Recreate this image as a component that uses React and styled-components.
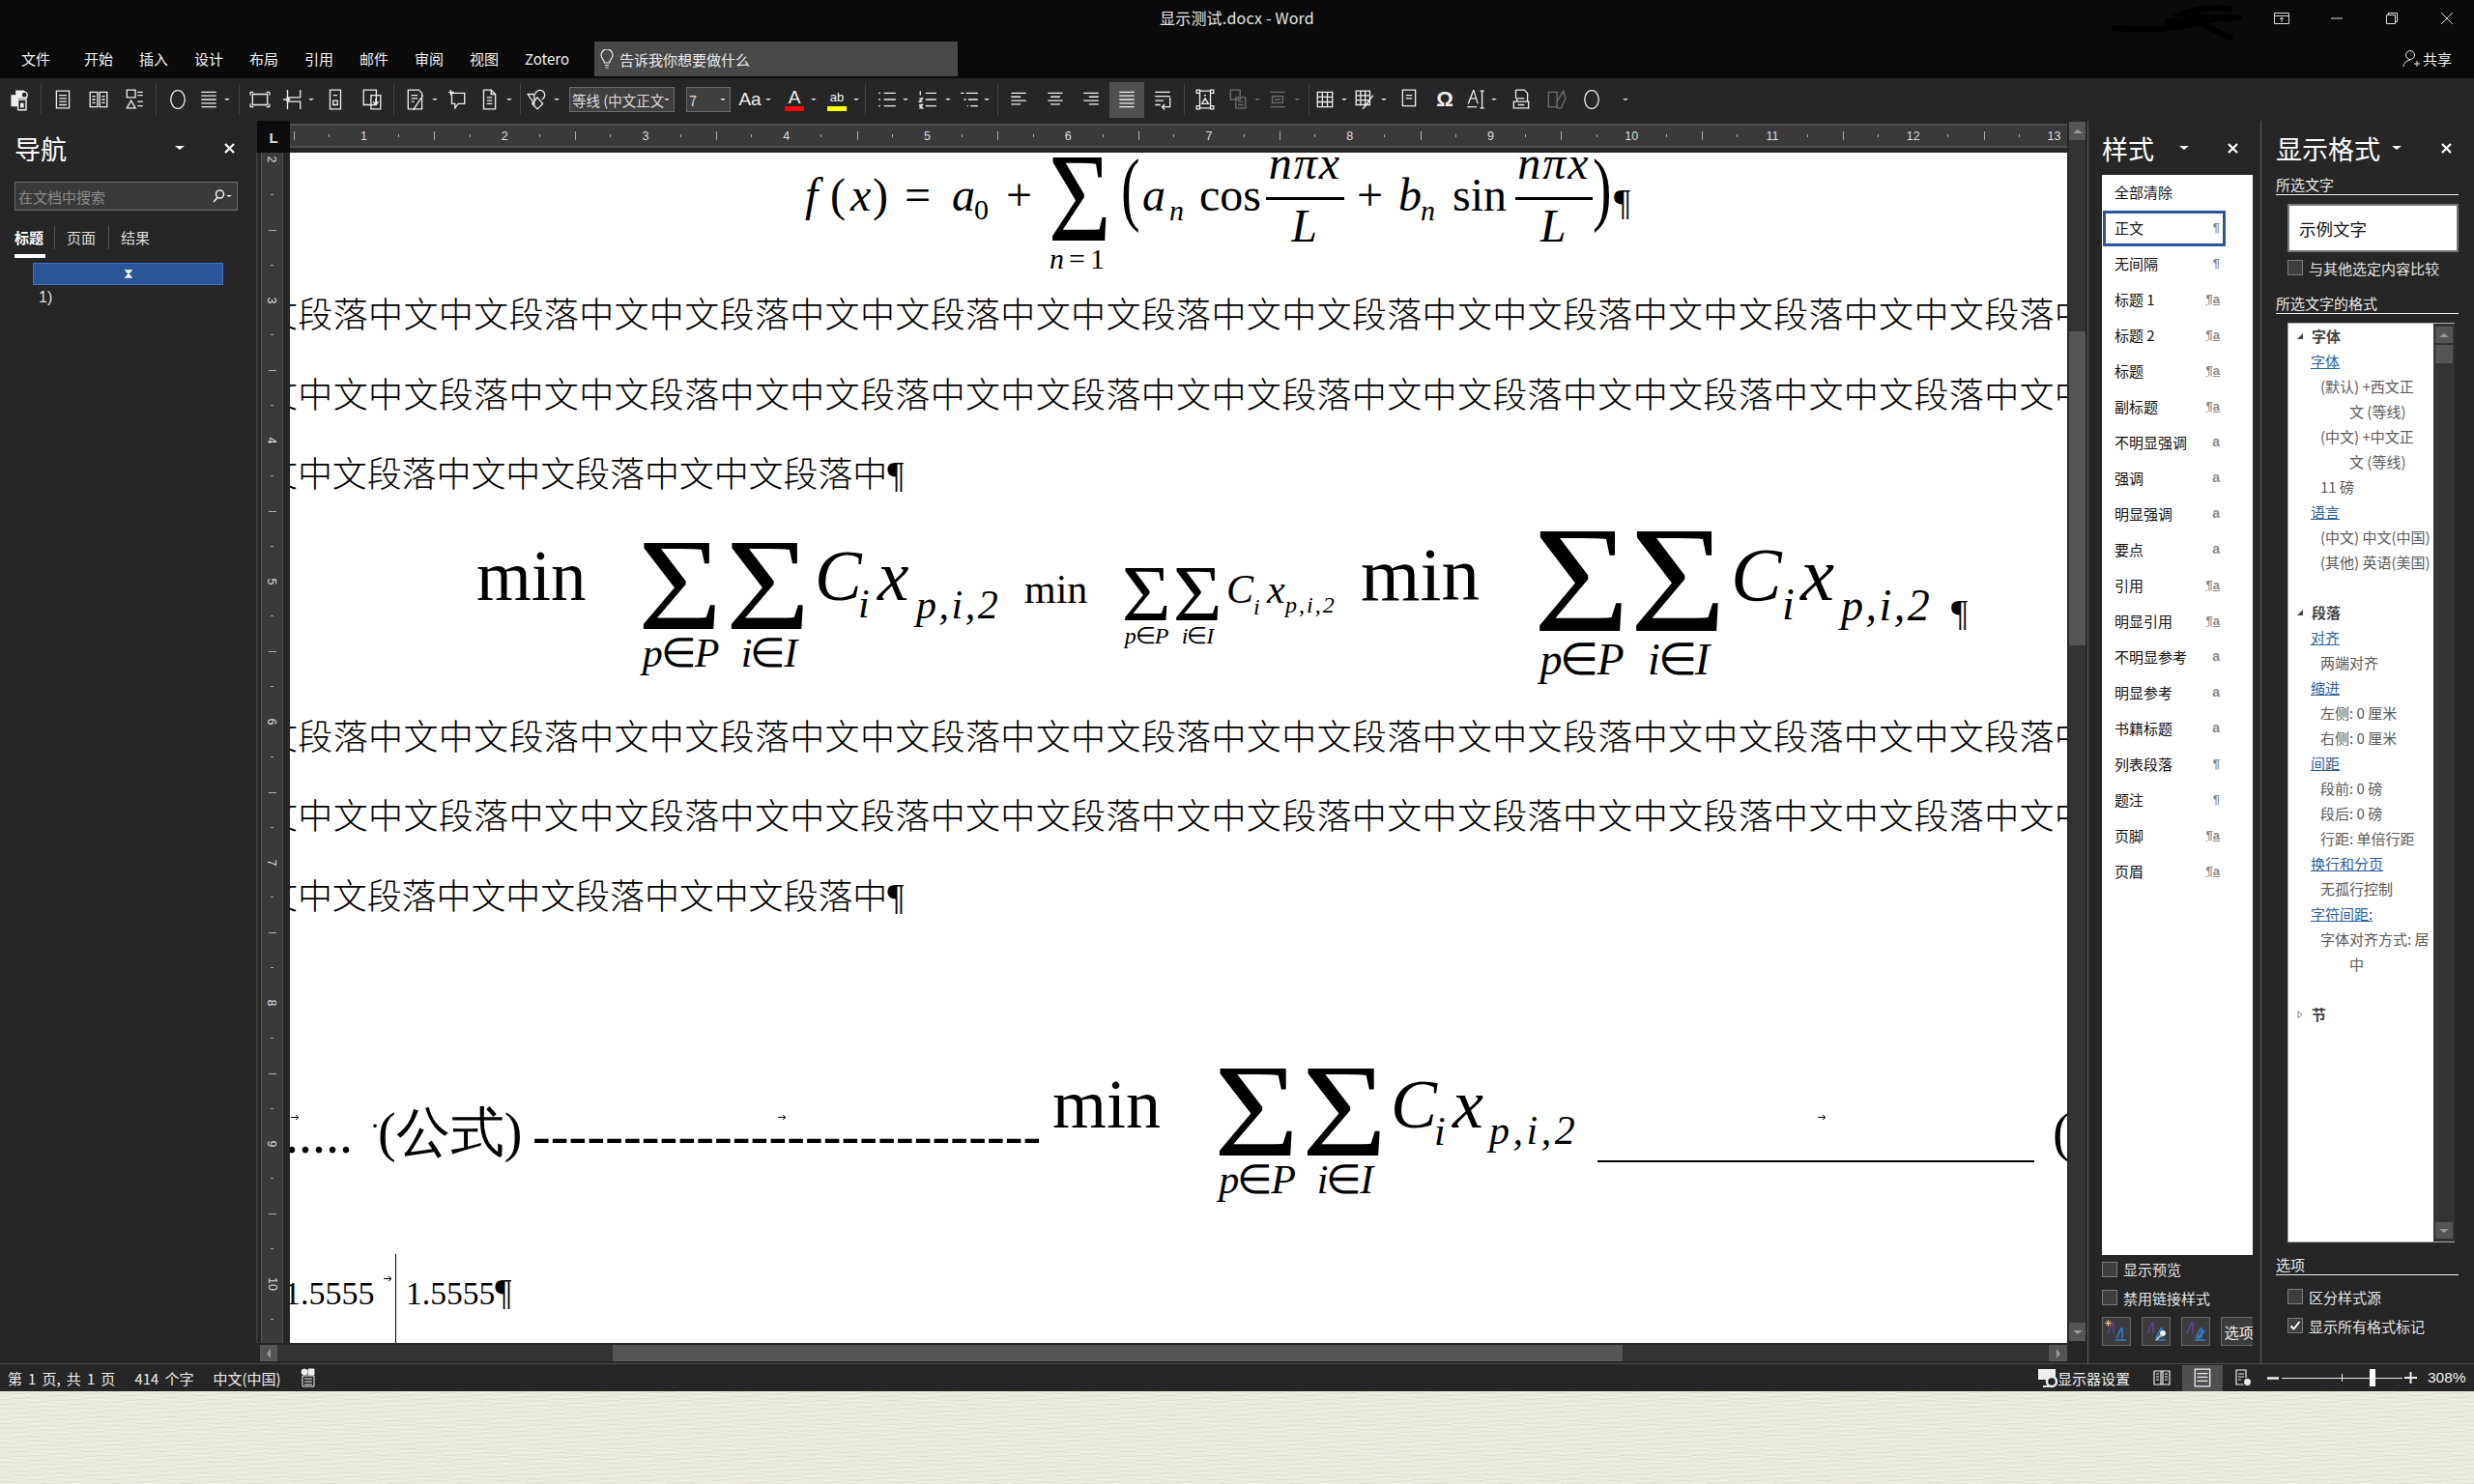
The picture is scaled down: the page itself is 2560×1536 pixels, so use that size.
import styled, { createGlobalStyle } from "styled-components";

const GlobalStyle = createGlobalStyle`
  html, body { margin: 0; padding: 0; background: #e9eadd; }
  body { font-family: "Noto Sans CJK SC", "Liberation Sans", sans-serif; font-size: 15px; color: #eee; }
  #root { width: 2560px; height: 1536px; overflow: hidden; }
  * { box-sizing: border-box; }
`;

const Shell = styled.div`
  display: flex;
  flex-direction: column;
  width: 2560px;
  height: 1536px;
`;

/* title bar + menu */
const TitleBar = styled.header`
  height: 81px;
  flex: none;
  background: #0a0a0a;
  display: flex;
  flex-direction: column;
`;

const TitleRow = styled.div`
  height: 43px;
  display: grid;
  grid-template-columns: 1fr auto 1fr;
`;

const DocTitle = styled.div`
  font-size: 16px;
  letter-spacing: 0.2px;
  line-height: 37px;
  color: #e6e6e6;
`;

const WindowButtons = styled.div`
  display: flex;
  justify-content: flex-end;
  align-items: flex-start;
`;

const WindowButton = styled.div`
  width: 57px;
  height: 38px;
  display: flex;
  align-items: center;
  justify-content: center;
`;

const Scribble = styled.svg`
  width: 150px;
  height: 44px;
  margin-right: 2px;
`;

const MenuRow = styled.nav`
  height: 38px;
  display: flex;
  align-items: flex-start;
  padding-left: 22px;
`;

const MenuItem = styled.span`
  width: ${(p) => p.$w || 30}px;
  margin-right: ${(p) => p.$gap ?? 27}px;
  font-size: 15px;
  line-height: 35px;
  white-space: nowrap;
  color: #f2f2f2;
`;

const TellMe = styled.div`
  width: 376px;
  height: 36px;
  background: #484848;
  display: flex;
  align-items: center;
  padding-left: 6px;
  gap: 6px;
  font-size: 15px;
  color: #e8e8e8;
`;

const Share = styled.div`
  margin-left: auto;
  margin-right: 23px;
  display: flex;
  align-items: center;
  gap: 3px;
  font-size: 15px;
  line-height: 35px;
  height: 35px;
  color: #f0f0f0;
`;

/* ribbon toolbar */
const Toolbar = styled.div`
  height: 44px;
  flex: none;
  background: #262626;
  display: flex;
  align-items: center;
`;

const Slot = styled.div`
  flex: none;
  width: ${(p) => p.$w}px;
  margin-left: ${(p) => p.$ml}px;
  height: ${(p) => (p.$active ? 37 : 30)}px;
  background: ${(p) => (p.$active ? "#505050" : "transparent")};
  opacity: ${(p) => (p.$dim ? 0.35 : 1)};
  display: flex;
  align-items: center;
  justify-content: center;
  color: #eee;
`;

const ToolSep = styled.div`
  flex: none;
  width: 1px;
  height: 32px;
  margin-left: ${(p) => p.$ml}px;
  background: #444;
`;

const Caret = styled.i`
  display: block;
  width: 0;
  height: 0;
  border-left: ${(p) => p.$size || 3.5}px solid transparent;
  border-right: ${(p) => p.$size || 3.5}px solid transparent;
  border-top: ${(p) => (p.$size || 3.5) * 0.85}px solid ${(p) => p.$color || "#e8e8e8"};
  transform: rotate(${(p) => p.$turn || 0}deg);
`;

const ComboBox = styled.div`
  flex: none;
  width: ${(p) => p.$w}px;
  margin-left: ${(p) => p.$ml}px;
  height: 26px;
  background: #3f3f3f;
  border: 1px solid #6b6b6b;
  display: flex;
  align-items: center;
  padding: 0 4px 0 2px;
  font-size: 14.5px;
  color: #ddd;
  overflow: hidden;
  white-space: nowrap;
`;

const ComboText = styled.span`
  flex: 1;
  overflow: hidden;
  min-width: 0;
`;

const ColorGlyph = styled.div`
  display: flex;
  flex-direction: column;
  align-items: center;
  width: 20px;
  font: ${(p) => p.$font};
  line-height: 19px;
  color: #f0f0f0;
  &::after {
    content: "";
    display: block;
    width: 100%;
    height: 5px;
    background: ${(p) => p.$bar};
  }
`;

const TextGlyph = styled.span`
  font-family: "Liberation Sans", sans-serif;
  font-size: ${(p) => p.$size}px;
  font-weight: ${(p) => p.$weight || 400};
  color: #eee;
`;

/* workspace */
const Workspace = styled.main`
  height: 1286px;
  flex: none;
  display: flex;
  background: #262626;
`;

const SidePanel = styled.aside`
  flex: none;
  width: ${(p) => p.$w}px;
  border-left: ${(p) => (p.$divider ? "1px solid #5c5c5c" : "none")};
  padding-left: ${(p) => p.$pad}px;
  display: flex;
  flex-direction: column;
`;

const PanelHead = styled.div`
  height: 56px;
  flex: none;
  display: flex;
  align-items: center;
`;

const PanelTitle = styled.h2`
  margin: 0;
  font-size: 27px;
  font-weight: 400;
  line-height: 1;
  color: #fff;
`;

const HeadCaret = styled.span`
  margin-left: ${(p) => p.$ml}px;
  display: flex;
`;

const CloseBox = styled.svg`
  width: 11px;
  height: 11px;
  margin-left: ${(p) => p.$ml}px;
`;

/* navigation pane */
const NavSearch = styled.div`
  width: 231px;
  height: 30px;
  margin-top: 7px;
  background: #3a3a3a;
  border: 1px solid #6e6e6e;
  display: flex;
  align-items: center;
  padding: 0 5px 0 3px;
  font-size: 15px;
  color: #8a8a8a;
`;

const NavSearchText = styled.span`
  flex: 1;
`;

const NavTabs = styled.div`
  display: flex;
  margin-top: 16px;
  height: 24px;
  align-items: center;
`;

const NavTab = styled.span`
  width: ${(p) => p.$w}px;
  font-size: 15px;
  font-weight: ${(p) => (p.$on ? 700 : 400)};
  color: ${(p) => (p.$on ? "#fff" : "#ddd")};
  border-right: ${(p) => (p.$line ? "1px solid #555" : "none")};
  margin-right: 12px;
  line-height: 24px;
`;

const NavUnderline = styled.div`
  width: 32px;
  height: 4px;
  margin-top: 5px;
  background: #fff;
`;

const NavHeading = styled.div`
  width: 197px;
  height: 23px;
  margin: 5px 0 0 19px;
  background: #2b579a;
  border: 1px solid #4472c4;
  display: flex;
  align-items: center;
  justify-content: center;
`;

const NavLeaf = styled.div`
  margin: 1px 0 0 25px;
  font-family: "Liberation Sans", sans-serif;
  font-size: 16px;
  line-height: 24px;
  color: #ddd;
`;

/* document frame */
const DocFrame = styled.section`
  flex: none;
  width: 1895px;
  display: grid;
  grid-template-columns: 35px 1839px 21px;
  grid-template-rows: 33px 1232px 21px;
`;

const RulerCorner = styled.div`
  background: #0c0c0c;
  display: flex;
  align-items: center;
  justify-content: center;
  margin-left: 1px;
  font-family: "Liberation Sans", sans-serif;
  font-size: 15px;
  font-weight: 700;
  color: #ddd;
  padding-top: 2px;
`;

const HRuler = styled.div`
  height: 25px;
  margin-top: 3px;
  background: #3a3a3a;
  border-top: 2px solid #4e4e4e;
  border-bottom: 2px solid #4e4e4e;
  padding-left: 3.6px;
  display: flex;
  overflow: hidden;
`;

const tickFill = "linear-gradient(#a8a8a8, #a8a8a8)";

const HRulerCell = styled.div`
  flex: none;
  width: 145.75px;
  display: flex;
  align-items: center;
  justify-content: center;
  font-family: "Liberation Sans", sans-serif;
  font-size: 12.5px;
  color: #ddd;
  background-image: ${tickFill}, ${tickFill}, ${tickFill};
  background-repeat: no-repeat;
  background-size: 1px 9px, 1px 3px, 1px 3px;
  background-position: 0 center, 25% center, 75% center;
`;

const VRulerCol = styled.div`
  padding: 0 7px 0 3px;
  overflow: hidden;
  background: #262626;
  border-left: 2px solid #3a3a3a;
`;

const VRuler = styled.div`
  background: #3a3a3a;
  height: 1232px;
  overflow: hidden;
  border-left: 1px solid #555;
  border-right: 1px solid #4e4e4e;
`;

const VRulerCell = styled.div`
  height: 145.5px;
  display: flex;
  align-items: center;
  justify-content: center;
  font-family: "Liberation Sans", sans-serif;
  font-size: 12.5px;
  color: #ddd;
  background-image: ${tickFill}, ${tickFill}, ${tickFill};
  background-repeat: no-repeat;
  background-size: 8px 1px, 3px 1px, 3px 1px;
  background-position: center 0, center 25%, center 75%;
  &:first-child {
    margin-top: -65.7px;
  }
`;

const VRulerNum = styled.span`
  transform: rotate(90deg);
`;

const VScroll = styled.div`
  grid-row: 1 / span 2;
  grid-column: 3;
  padding: 1px 2px 2px 2px;
  display: flex;
  flex-direction: column;
  background: #262626;
`;

const ScrollButton = styled.div`
  flex: none;
  width: ${(p) => p.$w}px;
  height: ${(p) => p.$h}px;
  background: #555;
  display: flex;
  align-items: center;
  justify-content: center;
  color: #999;
`;

const VTrack = styled.div`
  flex: 1;
  background: #333;
  padding-top: 198px;
`;

const VThumb = styled.div`
  height: 325px;
  background: #555;
`;

const HScroll = styled.div`
  grid-row: 3;
  grid-column: 1 / span 2;
  margin: 2px 0 2px 4px;
  display: flex;
  background: #262626;
`;

const HTrack = styled.div`
  flex: 1;
  background: #333;
  padding-left: 347px;
`;

const HThumb = styled.div`
  width: 1045px;
  height: 100%;
  background: #555;
`;

/* page */
const Page = styled.article`
  background: #fff;
  color: #000;
  overflow: hidden;
  display: flex;
  flex-direction: column;
  position: relative;
`;

const MathRow = styled.div`
  flex: none;
  width: ${(p) => (p.$width ? `${p.$width}px` : "auto")};
  height: ${(p) => p.$h}px;
  margin-left: ${(p) => p.$left || 0}px;
  padding-left: ${(p) => p.$pad || 0}px;
  display: flex;
  align-items: baseline;
  font-family: "Liberation Serif", serif;
  color: #000;
  border-left: ${(p) => (p.$rule ? "1px solid #000" : "none")};
  position: relative;
  &::before {
    content: "";
    flex: none;
    width: 0;
    height: ${(p) => p.$base}px;
  }
`;

const Atom = styled.span`
  flex: none;
  display: block;
  width: ${(p) => (p.$w ? `${p.$w}px` : "auto")};
  font-size: ${(p) => p.$size}px;
  font-style: ${(p) => (p.$i ? "italic" : "normal")};
  letter-spacing: ${(p) => p.$ls || 0}px;
  line-height: 0;
  white-space: pre;
  transform-origin: 0 0;
  transform: translateY(${(p) => p.$drop || 0}px) scaleX(${(p) => p.$sx || 1});
`;

const SumBox = styled.span`
  flex: none;
  width: ${(p) => p.$w}px;
  margin-right: ${(p) => p.$after}px;
  display: flex;
  flex-direction: column;
  align-items: center;
  transform: translateY(${(p) => p.$drop}px);
  line-height: 0;
`;

const SumGlyph = styled.span`
  font-size: ${(p) => p.$size}px;
  line-height: 0;
  transform: scaleX(${(p) => p.$sx});
`;

const SumLimit = styled.span`
  font-size: ${(p) => p.$size}px;
  font-style: italic;
  letter-spacing: ${(p) => p.$ls || 0}px;
  line-height: 0;
  white-space: pre;
  margin-top: ${(p) => p.$gap}px;
`;

const Upright = styled.span`
  font-style: normal;
`;

const Frac = styled.span`
  flex: none;
  width: ${(p) => p.$w}px;
  margin-right: ${(p) => p.$after}px;
  display: flex;
  flex-direction: column;
  align-items: center;
  font-size: 48px;
  font-style: italic;
  line-height: 1;
  letter-spacing: 2px;
  transform: translateY(-33px);
`;

const FracBar = styled.span`
  align-self: stretch;
  height: 3px;
  margin: 11px 0 3px;
  background: #000;
`;

const RuleAtom = styled.span`
  flex: none;
  align-self: flex-start;
  width: ${(p) => p.$w}px;
  height: 2px;
  background: #000;
  transform: translateY(${(p) => p.$top}px);
`;

const TabMark = styled.svg`
  position: absolute;
  left: ${(p) => p.$x}px;
  top: ${(p) => p.$y}px;
  width: 9px;
  height: 7px;
`;

const Para = styled.p`
  margin: 0;
  flex: none;
  font-family: "Noto Sans CJK SC", sans-serif;
  font-size: 36px;
  font-weight: 300;
  letter-spacing: 0.35px;
  line-height: 82.5px;
  white-space: nowrap;
  margin-left: -28px;
`;

const LastLine = styled.span`
  letter-spacing: -0.1px;
`;

const Pilcrow = styled.span`
  font-family: "Liberation Serif", serif;
  font-size: 38px;
`;

const TableRow = styled.div`
  flex: none;
  display: flex;
  height: 98px;
`;

/* styles pane */
const StyleList = styled.div`
  width: 156px;
  height: 1118px;
  flex: none;
  background: #fff;
`;

const StyleRow = styled.div`
  width: 127px;
  height: 37px;
  margin-left: 1px;
  display: flex;
  align-items: center;
  justify-content: space-between;
  padding: 0 ${(p) => (p.$on ? 3 : 6)}px 2px ${(p) => (p.$on ? 9 : 12)}px;
  border: ${(p) => (p.$on ? "3px solid #2b579a" : "none")};
  font-size: 15px;
  color: #111;
`;

const StyleMark = styled.span`
  font-family: "Liberation Sans", sans-serif;
  font-size: ${(p) => (p.$kind === "a" ? 14 : 13)}px;
  font-weight: 700;
  line-height: 13px;
  color: #8a8a8a;
  text-decoration: ${(p) => (p.$kind === "¶a" ? "underline" : "none")};
`;

const CheckRow = styled.label`
  height: ${(p) => p.$h || 30}px;
  margin-left: ${(p) => p.$ml || 0}px;
  margin-top: ${(p) => p.$mt || 0}px;
  display: flex;
  align-items: center;
  gap: 6px;
  font-size: 15px;
  color: #e4e4e4;
  flex: none;
`;

const CheckBox = styled.span`
  width: 16px;
  height: 16px;
  flex: none;
  background: #3e3e3e;
  border: 1px solid #7a7a7a;
  display: flex;
  align-items: center;
  justify-content: center;
`;

const StyleButtons = styled.div`
  display: flex;
  gap: 11px;
  width: 156px;
  overflow: hidden;
  margin-top: 5px;
  flex: none;
`;

const StyleButton = styled.div`
  flex: none;
  width: ${(p) => p.$w || 30}px;
  height: 30px;
  background: #3c3c3c;
  border: 1px solid #666;
  display: flex;
  align-items: center;
  justify-content: center;
  font-size: 15px;
  color: #eee;
  white-space: nowrap;
  overflow: hidden;
`;

/* reveal formatting pane */
const SectionLabel = styled.div`
  width: 189px;
  height: ${(p) => p.$h}px;
  margin-top: ${(p) => p.$mt || 0}px;
  flex: none;
  display: flex;
  align-items: flex-end;
  border-bottom: 1px solid #eee;
  font-size: 15px;
  line-height: 20px;
  color: #eaeaea;
`;

const SampleBox = styled.div`
  width: 177px;
  height: 50px;
  margin: 9px 0 0 12px;
  flex: none;
  background: #fff;
  border: 2px solid #777;
  display: flex;
  align-items: center;
  padding-left: 10px;
  font-size: 17.5px;
  color: #111;
`;

const RevealBox = styled.div`
  width: 173px;
  height: 952px;
  margin: 9px 0 0 12px;
  flex: none;
  background: #fff;
  border: 1px solid #aaa;
  display: flex;
`;

const RevealBody = styled.div`
  width: 150px;
  flex: none;
  overflow: hidden;
`;

const RevealRow = styled.div`
  height: 26px;
  padding-left: ${(p) => p.$indent}px;
  font-size: 15px;
  line-height: 26px;
  white-space: nowrap;
  display: flex;
  align-items: center;
  font-weight: ${(p) => (p.$kind === "head" ? 700 : 400)};
  color: ${(p) => (p.$kind === "link" ? "#2b5f9e" : p.$kind === "head" ? "#444" : "#5a5a5a")};
  text-decoration: ${(p) => (p.$kind === "link" ? "underline" : "none")};
`;

const Twisty = styled.svg`
  width: 8px;
  height: 8px;
  margin-right: 8px;
  margin-left: -16px;
  flex: none;
`;

const RevealScroll = styled.div`
  flex: 1;
  background: #333;
  padding: 3px 2px;
  display: flex;
  flex-direction: column;
`;

const RevealThumb = styled.div`
  height: 19px;
  margin-top: 2px;
  background: #555;
`;

const RevealSpace = styled.div`
  flex: 1;
`;

/* status bar */
const StatusBar = styled.footer`
  height: 29px;
  flex: none;
  background: #262626;
  border-top: 1px solid #4a4a4a;
  display: flex;
  align-items: center;
  padding-left: 8px;
  font-size: 15px;
  word-spacing: 2.75px;
  color: #eee;
  white-space: nowrap;
`;

const StatusText = styled.span`
  margin-right: ${(p) => p.$gap || 0}px;
`;

const StatusRight = styled.div`
  margin-left: auto;
  display: flex;
  align-items: center;
  height: 100%;
`;

const ViewButton = styled.div`
  width: 42px;
  height: 27px;
  background: ${(p) => (p.$on ? "#505050" : "transparent")};
  display: flex;
  align-items: center;
  justify-content: center;
`;

const ZoomMinus = styled.svg`
  width: 14px;
  height: 3px;
  margin-left: 4px;
`;

const ZoomTrack = styled.div`
  width: 125px;
  height: 1px;
  background: #eee;
  margin: 0 2px 0 1px;
  display: flex;
  align-items: center;
  padding-left: 62px;
`;

const ZoomMark = styled.i`
  display: block;
  width: 1px;
  height: 8px;
  background: #eee;
`;

const ZoomThumb = styled.i`
  display: block;
  width: 6px;
  height: 18px;
  margin-left: 28px;
  background: #fff;
`;

const ZoomValue = styled.span`
  width: 40px;
  margin: 0 8px 0 10px;
  font-family: "Liberation Sans", sans-serif;
  font-size: 15.5px;
`;

const Wallpaper = styled.div`
  flex: 1;
  background-color: #e9eadd;
  background-image:
    repeating-linear-gradient(3deg, rgba(255, 255, 255, 0.3) 0 1px, transparent 1px 4px),
    repeating-linear-gradient(-4deg, rgba(170, 175, 140, 0.16) 0 1px, transparent 1px 5px);
`;

/* toolbar icons */
const strokeIcons = {
  doc: "M4 2h12v16H4zM6.5 6h7M6.5 9h7M6.5 12h7M6.5 15h7",
  twocol: "M2 3h7v14H2zM11 3h7v14h-7zM4 7h3M4 10h3M4 13h3M13 7h3M13 10h3M13 13h3",
  shapes: "M3 1h8v7H3zM13 3h5M13 6h5M7 11l-4 7h8zM13 12h5M13 16h5",
  circle: "M10 1.5a6.5 8.5 0 1 0 .01 0z",
  lines: "M3 3h14M3 6.5h14M3 10h14M3 13.5h14M3 17h14",
  frame: "M3 5h14v10H3zM1 3h3M1 3v3M16 3h3M19 3v3M1 17h3M1 17v-3M16 17h3M19 17v-3",
  split: "M5 1v7h12V1M5 19v-7h12v7M1 10h6M4 8l3 2-3 2",
  phone: "M5 1h10v18H5zM8 11h4v4H8zM8 6h4",
  twopage: "M2 1h12v14H2zM9 6h9v13H9zM11 12l2.5 3 2.5-3M13.5 9v6",
  edit: "M3 1h10l3 3v15H3zM6 6h6M6 9h6M6 12h3M17 6l-8 12-1 2",
  comment: "M5 4h12v10h-6l-3 4v-4H5zM4 1v5M2 3h5",
  page: "M5 1h7l4 4v14H5zM12 1v4h4M8 8h5M8 11h5M8 14h5",
  diamond: "M2 5h6v9zM11 8l5 6-5 5-5-5zM9 5a4.5 4.5 0 1 1 6 5",
  bullets: "M7 4h11M7 10h11M7 16h11M2 4h1.5M2 10h1.5M2 16h1.5",
  numbers: "M8 4h10M8 10h10M8 16h10M3 2v4M2 9h3l-3 3h3M2 15h3l-1 1.5h-1l2 1.5h-3",
  multi: "M2 4h3M7 4h11M5 10h2M9 10h9M8 16h1M11 16h7",
  left: "M3 4h14M3 7.5h9M3 11h14M3 14.5h9",
  center: "M3 4h14M5.5 7.5h9M3 11h14M5.5 14.5h9",
  right: "M3 4h14M8 7.5h9M3 11h14M8 14.5h9",
  justify: "M3 3h14M3 6.5h14M3 10h14M3 13.5h14M3 17h14",
  spacing: "M3 3h14M3 7h14M3 11h8M3 15h5M17 8v9h-7M12 14.5l-2.5 2.5 2.5 2.5",
  picture: "M5 2h10v16H5zM2 1h3v3H2zM15 1h3v3h-3zM2 16h3v3H2zM15 16h3v3h-3zM7 14l3-5 3 5zM9 6h2",
  wrap: "M3 1h9v9H3zM8 8h9v10H8zM10 12h5M10 15h5",
  group: "M3 3h14M3 17h14M5 7h10v6H5zM7 10h6",
  table: "M3 3h14v14H3zM3 7.6h14M3 12.3h14M7.6 3v14M12.3 3v14",
  pentable: "M2 2h13v13H2zM2 6.3h13M2 10.6h13M6.3 2v13M10.6 2v13M18 6l-8 11-2 2",
  form: "M4 1h12v15H4zM7 6h6M7 9h6",
  textfx: "M8 1L3 14M8 1l4 13M5 9h6M16 2v16M14 2h4M14 18h4M2 17h9",
  printer: "M5 1h8l3 3v8M5 1v8M3 12h14v6H3zM6 9h7M7 15h6M6 12V9",
  pen: "M3 3h8v14H3zM17 2l-6 10v6h4l4-9z",
  read: "M2 3h7v14H2zM11 3h7v14h-7zM4 6h3M4 9h3M4 12h3M13 6h3M13 9h3M13 12h3M9 3h2M9 17h2",
  print: "M3 2h14v16H3zM5 6h10M5 9.5h10M5 13h10",
  web: "M3 2h10v15H3zM5 6h6M5 9h6M5 12h3",
};

const ToolIcon = ({ name, size = 22 }) => (
  <svg width={size} height={size} viewBox="0 0 20 20" fill="none" stroke="currentColor" strokeWidth="1.2">
    <path d={strokeIcons[name]} />
    {name === "web" && <circle cx="14.5" cy="14.5" r="4" fill="#eee" stroke="#262626" />}
  </svg>
);

const toolItems = [
  { el: "save", x: 21 }, { sep: 42 },
  { icon: "doc", x: 65 }, { icon: "twocol", x: 102 }, { icon: "shapes", x: 139 }, { sep: 161 },
  { icon: "circle", x: 184 }, { icon: "lines", x: 216 }, { caret: 235 }, { sep: 247 },
  { icon: "frame", x: 269 }, { icon: "split", x: 303 }, { caret: 322 }, { icon: "phone", x: 347 }, { icon: "twopage", x: 385 }, { sep: 407 },
  { icon: "edit", x: 430 }, { caret: 450 }, { icon: "comment", x: 473 }, { icon: "page", x: 506 }, { caret: 527 }, { sep: 538 },
  { icon: "diamond", x: 555 }, { caret: 576 },
  { combo: "等线 (中文正文)", x: 643.5, w: 109 }, { combo: "7", x: 733, w: 46 },
  { el: "aa", x: 776 }, { caret: 795 }, { el: "fontColor", x: 822 }, { caret: 842 }, { el: "highlight", x: 866 }, { caret: 886 }, { sep: 895 },
  { icon: "bullets", x: 918 }, { caret: 937 }, { icon: "numbers", x: 960 }, { caret: 981 }, { icon: "multi", x: 1003 }, { caret: 1021 }, { sep: 1032 },
  { icon: "left", x: 1054 }, { icon: "center", x: 1092 }, { icon: "right", x: 1129 }, { icon: "justify", x: 1166, active: true, w: 36 }, { icon: "spacing", x: 1203 }, { sep: 1225 },
  { icon: "picture", x: 1247 }, { icon: "wrap", x: 1281, dim: true }, { caret: 1301, dim: true }, { icon: "group", x: 1322, dim: true }, { caret: 1342, dim: true }, { sep: 1354 },
  { icon: "table", x: 1371 }, { caret: 1391 }, { icon: "pentable", x: 1412 }, { caret: 1432 }, { icon: "form", x: 1458 }, { el: "omega", x: 1495 }, { icon: "textfx", x: 1527 }, { caret: 1546 }, { icon: "printer", x: 1574 }, { icon: "pen", x: 1610, dim: true }, { icon: "circle", x: 1647 }, { caret: 1682 },
];

const toolWidth = (t) => t.w || (t.sep !== undefined ? 1 : t.caret !== undefined ? 8 : 24);
const toolCenter = (t) => (t.sep !== undefined ? t.sep : t.caret !== undefined ? t.caret : t.x);

const ToolGlyph = ({ el }) => {
  if (el === "aa") return <TextGlyph $size={19}>Aa</TextGlyph>;
  if (el === "omega") return <TextGlyph $size={22} $weight={700}>Ω</TextGlyph>;
  if (el === "fontColor") return <ColorGlyph $font='400 19px "Liberation Sans", sans-serif' $bar="#f00">A</ColorGlyph>;
  if (el === "highlight") return <ColorGlyph $font='400 13px "Liberation Sans", sans-serif' $bar="#ff0">ab</ColorGlyph>;
  return (
    <svg width="24" height="24" viewBox="0 0 20 20">
      <path d="M6 2h7l3 3v4H6z" fill="#eee" />
      <path d="M2 6h6v10H2z" fill="#eee" />
      <path d="M8 10h7v9H8z" fill="#262626" stroke="#eee" strokeWidth="1.2" />
      <circle cx="13.5" cy="6" r="2.5" fill="#262626" stroke="#eee" />
      <path d="M10 13h3v4h-3z" fill="#eee" />
    </svg>
  );
};

const RibbonTools = () => {
  let end = 0;
  return (
    <Toolbar>
      {toolItems.map((t, idx) => {
        const w = toolWidth(t);
        const ml = toolCenter(t) - w / 2 - end;
        end = toolCenter(t) + w / 2;
        if (t.sep !== undefined) return <ToolSep key={idx} $ml={ml} />;
        if (t.combo)
          return (
            <ComboBox key={idx} $w={w} $ml={ml}>
              <ComboText>{t.combo}</ComboText>
              <Caret />
            </ComboBox>
          );
        return (
          <Slot key={idx} $w={w} $ml={ml} $active={t.active} $dim={t.dim}>
            {t.caret !== undefined ? <Caret /> : t.icon ? <ToolIcon name={t.icon} /> : <ToolGlyph el={t.el} />}
          </Slot>
        );
      })}
    </Toolbar>
  );
};

/* equations: each item has the x it starts at, its width runs to the next item */
const MID_RATIO = 0.3375; // (ascent - descent) / 2 of Liberation Serif
const CAP_RATIO = 0.66;

const Sum = ({ w, after, h, bottom, limitY, limit, limitSize, ls, sx = 1 }) => {
  const size = h / CAP_RATIO;
  const gap = limitY - bottom + MID_RATIO * size - MID_RATIO * limitSize;
  return (
    <SumBox $w={w} $after={after} $drop={bottom}>
      <SumGlyph $size={size} $sx={sx}>Σ</SumGlyph>
      <SumLimit $size={limitSize} $gap={gap} $ls={ls}>{limit}</SumLimit>
    </SumBox>
  );
};

const PIn = () => (<>p<Upright>∈</Upright>P</>);
const IIn = () => (<>i<Upright>∈</Upright>I</>);
const N1 = () => (<>n<Upright>=1</Upright></>);

const EquationRow = ({ items, size, base, h, children }) => (
  <MathRow $base={base} $h={h} $left={items[0].x - 300}>
    {items.map((it, idx) => {
      const next = items[idx + 1];
      const span = next ? next.x - it.x : it.w;
      if (it.sum) return <Sum key={idx} w={it.w} after={span - it.w} {...it.sum} />;
      if (it.frac)
        return (
          <Frac key={idx} $w={it.w} $after={span - it.w}>
            nπx<FracBar />L
          </Frac>
        );
      if (it.rule) return <RuleAtom key={idx} $w={span} $top={it.top} />;
      return (
        <Atom key={idx} $w={span} $size={it.size || size} $i={it.i} $drop={it.drop} $ls={it.ls} $sx={it.sx}>
          {it.t}
        </Atom>
      );
    })}
    {children}
  </MathRow>
);

const eq1 = [
  { x: 833, t: "f", i: 1 }, { x: 859, t: "(" }, { x: 880, t: "x", i: 1 }, { x: 903, t: ")" }, { x: 936, t: "=" },
  { x: 985, t: "a", i: 1 }, { x: 1008, t: "0", size: 30, drop: 9 }, { x: 1041, t: "+" },
  { x: 1086, w: 62, sum: { h: 87, sx: 0.85, bottom: 31, limitY: 60, limit: <N1 />, limitSize: 30, ls: 5 } },
  { x: 1160, t: "(", size: 84, sx: 0.7, drop: 5 }, { x: 1182, t: "a", i: 1 }, { x: 1210, t: "n", i: 1, size: 30, drop: 10 },
  { x: 1241, t: "cos" }, { x: 1310, w: 81, frac: 1 }, { x: 1404, t: "+" }, { x: 1447, t: "b", i: 1 }, { x: 1470, t: "n", i: 1, size: 30, drop: 10 },
  { x: 1503, t: "sin" }, { x: 1568, w: 80, frac: 1 }, { x: 1648, t: ")", size: 84, sx: 0.7, drop: 5 }, { x: 1670, t: "¶", size: 38, drop: 4, w: 20 },
];

const eq2 = [
  { x: 493, t: "min" },
  { x: 667, w: 73, sum: { h: 90, sx: 1.1, bottom: 30, limitY: 70, limit: <PIn />, limitSize: 42, ls: -2 } },
  { x: 758, w: 74, sum: { h: 90, sx: 1.1, bottom: 30, limitY: 70, limit: <IIn />, limitSize: 42, ls: -2 } },
  { x: 843, t: "C", i: 1 }, { x: 888, t: "i", i: 1, size: 42, drop: 18 }, { x: 908, t: "x", i: 1 },
  { x: 948, t: "p,i,2", i: 1, size: 42, drop: 19, ls: 2.5 },
  { x: 1060, t: "min", size: 42, drop: 3 },
  { x: 1164, w: 44, sum: { h: 55, sx: 1.05, bottom: 21, limitY: 45, limit: <PIn />, limitSize: 24, ls: -1 } },
  { x: 1217, w: 44, sum: { h: 55, sx: 1.05, bottom: 21, limitY: 45, limit: <IIn />, limitSize: 24, ls: -1 } },
  { x: 1269, t: "C", i: 1, size: 42, drop: 3 }, { x: 1297, t: "i", i: 1, size: 24, drop: 15 }, { x: 1311, t: "x", i: 1, size: 42, drop: 3 },
  { x: 1330, t: "p,i,2", i: 1, size: 24, drop: 13, ls: 2 },
  { x: 1408, t: "min", size: 79 },
  { x: 1596, w: 80, sum: { h: 103, sx: 1.1, bottom: 32, limitY: 77, limit: <PIn />, limitSize: 46, ls: -2 } },
  { x: 1696, w: 80, sum: { h: 103, sx: 1.1, bottom: 32, limitY: 77, limit: <IIn />, limitSize: 46, ls: -2 } },
  { x: 1791, t: "C", i: 1, size: 79 }, { x: 1844, t: "i", i: 1, size: 46, drop: 20 }, { x: 1863, t: "x", i: 1, size: 79 },
  { x: 1905, t: "p,i,2", i: 1, size: 46, drop: 21, ls: 2.5 },
  { x: 2019, t: "¶", size: 38, drop: 26, w: 20 },
];

const eq3 = [
  { x: 295, t: ".....", size: 56, drop: 26 }, { x: 383, t: "·", size: 30, drop: 8 }, { x: 391, t: "(公式)", size: 56, drop: 24 },
  { x: 551, t: "-".repeat(28), size: 56, drop: 27, ls: 0.15 },
  { x: 1089, t: "min", size: 72 },
  { x: 1263, w: 74, sum: { h: 91, sx: 1.1, bottom: 29, limitY: 68, limit: <PIn />, limitSize: 42, ls: -2 } },
  { x: 1354, w: 74, sum: { h: 91, sx: 1.1, bottom: 29, limitY: 68, limit: <IIn />, limitSize: 42, ls: -2 } },
  { x: 1439, t: "C", i: 1, size: 72 }, { x: 1484, t: "i", i: 1, size: 42, drop: 18 }, { x: 1503, t: "x", i: 1, size: 72 },
  { x: 1541, t: "p,i,2", i: 1, size: 42, drop: 17, ls: 3.5 },
  { x: 1653, rule: 1, top: 232 },
  { x: 2105, t: " ", size: 56 },
  { x: 2124, t: "(", size: 56, drop: 24 },
];

const ParaLines = () => {
  const unit = "中文中文段落";
  return (
    <Para>
      {"文段落" + unit.repeat(9)}
      <br />
      {"文" + unit.repeat(9)}
      <br />
      <LastLine>文中文段落中文中文段落中文中文段落中</LastLine>
      <Pilcrow>¶</Pilcrow>
    </Para>
  );
};

const Arrow = () => <path d="M0 3.5h7M5 1l3 2.5L5 6" fill="none" stroke="#000" strokeWidth="1" />;

/* right panes */
const styleNames = [
  ["全部清除", ""], ["正文", "¶"], ["无间隔", "¶"], ["标题 1", "¶a"], ["标题 2", "¶a"], ["标题", "¶a"], ["副标题", "¶a"],
  ["不明显强调", "a"], ["强调", "a"], ["明显强调", "a"], ["要点", "a"], ["引用", "¶a"], ["明显引用", "¶a"], ["不明显参考", "a"],
  ["明显参考", "a"], ["书籍标题", "a"], ["列表段落", "¶"], ["题注", "¶"], ["页脚", "¶a"], ["页眉", "¶a"],
];

const revealRows = [
  ["head", 24, "字体", "open"], ["link", 23, "字体"], ["text", 33, "(默认) +西文正"], ["text", 63, "文 (等线)"], ["text", 33, "(中文) +中文正"],
  ["text", 63, "文 (等线)"], ["text", 33, "11 磅"], ["link", 23, "语言"], ["text", 33, "(中文) 中文(中国)"], ["text", 33, "(其他) 英语(美国)"], ["text", 33, ""],
  ["head", 24, "段落", "open"], ["link", 23, "对齐"], ["text", 33, "两端对齐"], ["link", 23, "缩进"], ["text", 33, "左侧:  0 厘米"], ["text", 33, "右侧:  0 厘米"],
  ["link", 23, "间距"], ["text", 33, "段前: 0 磅"], ["text", 33, "段后: 0 磅"], ["text", 33, "行距: 单倍行距"], ["link", 23, "换行和分页"], ["text", 33, "无孤行控制"],
  ["link", 23, "字符间距:"], ["text", 33, "字体对齐方式: 居"], ["text", 63, "中"], ["text", 33, ""], ["head", 24, "节", "closed"],
];

const CloseIcon = ({ ml }) => (
  <CloseBox $ml={ml} viewBox="0 0 11 11">
    <path d="M1 1l9 9M10 1l-9 9" stroke="#fff" strokeWidth="2.2" />
  </CloseBox>
);

const CheckMark = () => (
  <svg width="12" height="12" viewBox="0 0 12 12">
    <path d="M1.5 6.5l3 3 6-7.5" fill="none" stroke="#fff" strokeWidth="2" />
  </svg>
);

const FancyA = ({ mark }) => (
  <svg width="24" height="24" viewBox="0 0 24 24" fill="none">
    <path d="M3 14L8 3h1v11" stroke="#6b3fa0" strokeWidth="1.4" />
    <path d="M12 19l5-10h1v10M11 21h11" stroke="#2f7cd0" strokeWidth="1.6" />
    {mark === "new" && <path d="M1 1l5 5M6 1L1 6M3.5 0v7M0 3.5h7" stroke="#d9b36a" strokeWidth="1" />}
    {mark === "inspect" && <circle cx="19" cy="14" r="3" fill="#eee" />}
    {mark === "inspect" && <path d="M17 16l-5 5" stroke="#bbb" strokeWidth="2" />}
    {mark === "manage" && <path d="M21 11l-7 9" stroke="#2f7cd0" strokeWidth="2.5" />}
  </svg>
);

export default function App() {
  return (
    <>
      <GlobalStyle />
      <Shell>
        <TitleBar>
          <TitleRow>
            <span />
            <DocTitle>显示测试.docx - Word</DocTitle>
            <WindowButtons>
              <Scribble viewBox="0 0 150 44">
                <path d="M5 29c30 3 60 1 85-4 20-4 25-10 50-6M70 18c20-10 40-12 60-8M60 22c25 5 45-8 65-4M95 22c10 8 30 15 35 18M75 14c20 5 35 2 55 6" stroke="#000" strokeWidth="6" fill="none" />
              </Scribble>
              <WindowButton>
                <svg width="16" height="13" viewBox="0 0 16 13" fill="none" stroke="#ddd"><path d="M.5.5h15v11H.5zM.5 3.5h15M8 10V5M6 7l2-2 2 2" /></svg>
              </WindowButton>
              <WindowButton>
                <svg width="12" height="2" viewBox="0 0 12 2"><path d="M0 1h12" stroke="#ddd" /></svg>
              </WindowButton>
              <WindowButton>
                <svg width="12" height="12" viewBox="0 0 12 12" fill="none" stroke="#ddd"><path d="M.5 2.5h9v9h-9zM2.5 2.5v-2h9v9h-2" /></svg>
              </WindowButton>
              <WindowButton>
                <svg width="12" height="12" viewBox="0 0 12 12"><path d="M0 0l12 12M12 0L0 12" stroke="#ddd" /></svg>
              </WindowButton>
            </WindowButtons>
          </TitleRow>
          <MenuRow>
            <MenuItem $gap={35}>文件</MenuItem>
            <MenuItem>开始</MenuItem>
            <MenuItem>插入</MenuItem>
            <MenuItem>设计</MenuItem>
            <MenuItem>布局</MenuItem>
            <MenuItem>引用</MenuItem>
            <MenuItem>邮件</MenuItem>
            <MenuItem>审阅</MenuItem>
            <MenuItem>视图</MenuItem>
            <MenuItem $w={49} $gap={23}>Zotero</MenuItem>
            <TellMe>
              <svg width="14" height="21" viewBox="0 0 14 21" fill="none" stroke="#eee" strokeWidth="1.2">
                <path d="M4.5 14c0-3-3.5-4-3.5-8a6 6 0 0 1 12 0c0 4-3.5 5-3.5 8zM5 16.500h4M5.500 19h3" />
              </svg>
              告诉我你想要做什么
            </TellMe>
            <Share>
              <svg width="18" height="19" viewBox="0 0 18 19" fill="none" stroke="#eee">
                <circle cx="8" cy="6" r="4.500" />
                <path d="M1 18c0-4 3-6 7-7M12 15h6M15 12v6" />
              </svg>
              共享
            </Share>
          </MenuRow>
        </TitleBar>

        <RibbonTools />

        <Workspace>
          <SidePanel $w={265} $pad={15}>
            <PanelHead>
              <PanelTitle>导航</PanelTitle>
              <HeadCaret $ml={112}><Caret $size={5.5} $color="#fff" /></HeadCaret>
              <CloseIcon ml={41} />
            </PanelHead>
            <NavSearch>
              <NavSearchText>在文档中搜索</NavSearchText>
              <svg width="16" height="16" viewBox="0 0 16 16" fill="none" stroke="#eee" strokeWidth="1.6">
                <circle cx="9.500" cy="6" r="4" />
                <path d="M7 9.500L3 14" />
              </svg>
              <Caret />
            </NavSearch>
            <NavTabs>
              <NavTab $w={42} $on $line>标题</NavTab>
              <NavTab $w={44} $line>页面</NavTab>
              <NavTab $w={40}>结果</NavTab>
            </NavTabs>
            <NavUnderline />
            <NavHeading>
              <svg width="8" height="9" viewBox="0 0 8 9"><path d="M0 .5h8M0 8.500h8M1 1.500h6L4 4.500zM1 7.500h6L4 4.500z" fill="#fff" stroke="#fff" strokeWidth=".8" /></svg>
            </NavHeading>
            <NavLeaf>1)</NavLeaf>
          </SidePanel>

          <DocFrame>
            <RulerCorner>L</RulerCorner>
            <HRuler>
              {[1, 2, 3, 4, 5, 6, 7, 8, 9, 10, 11, 12, 13].map((n) => (
                <HRulerCell key={n}>{n}</HRulerCell>
              ))}
            </HRuler>
            <VScroll>
              <ScrollButton $w={17} $h={19}><Caret $size={5} $color="#999" $turn={180} /></ScrollButton>
              <VTrack><VThumb /></VTrack>
              <ScrollButton $w={17} $h={19}><Caret $size={5} $color="#999" /></ScrollButton>
            </VScroll>
            <VRulerCol>
              <VRuler>
                {[2, 3, 4, 5, 6, 7, 8, 9, 10].map((n) => (
                  <VRulerCell key={n}><VRulerNum>{n}</VRulerNum></VRulerCell>
                ))}
              </VRuler>
            </VRulerCol>
            <Page>
              <EquationRow items={eq1} size={48} base={60} h={124} />
              <ParaLines />
              <EquationRow items={eq2} size={73} base={88} h={186} />
              <ParaLines />
              <EquationRow items={eq3} size={72} base={198} h={329}>
                <TabMark $x={6} $y={184} viewBox="0 0 9 7"><Arrow /></TabMark>
                <TabMark $x={510} $y={184} viewBox="0 0 9 7"><Arrow /></TabMark>
                <TabMark $x={1586} $y={184} viewBox="0 0 9 7"><Arrow /></TabMark>
              </EquationRow>
              <TableRow>
                <EquationRow items={[{ x: 294, t: "1.5555", size: 34, w: 115 }]} base={52} h={98} />
                <MathRow $base={52} $h={98} $pad={10} $rule $width={300}>
                  <Atom $size={33.5}>1.5555</Atom>
                  <Atom $size={38}>¶</Atom>
                  <TabMark $x={-13} $y={22} viewBox="0 0 9 7"><Arrow /></TabMark>
                </MathRow>
              </TableRow>
            </Page>
            <HScroll>
              <ScrollButton $w={18} $h={17}><Caret $size={5} $color="#999" $turn={90} /></ScrollButton>
              <HTrack><HThumb /></HTrack>
              <ScrollButton $w={19} $h={17}><Caret $size={5} $color="#999" $turn={-90} /></ScrollButton>
            </HScroll>
          </DocFrame>

          <SidePanel $w={179} $pad={14} $divider>
            <PanelHead>
              <PanelTitle>样式</PanelTitle>
              <HeadCaret $ml={26}><Caret $size={5.5} $color="#fff" /></HeadCaret>
              <CloseIcon ml={40} />
            </PanelHead>
            <StyleList>
              {styleNames.map(([name, mark]) => (
                <StyleRow key={name} $on={name === "正文"}>
                  {name}
                  <StyleMark $kind={mark}>{mark}</StyleMark>
                </StyleRow>
              ))}
            </StyleList>
            <CheckRow $h={29}><CheckBox />显示预览</CheckRow>
            <CheckRow $h={30}><CheckBox />禁用链接样式</CheckRow>
            <StyleButtons>
              <StyleButton><FancyA mark="new" /></StyleButton>
              <StyleButton><FancyA mark="inspect" /></StyleButton>
              <StyleButton><FancyA mark="manage" /></StyleButton>
              <StyleButton $w={50}>选项...</StyleButton>
            </StyleButtons>
          </SidePanel>

          <SidePanel $w={221} $pad={15} $divider>
            <PanelHead>
              <PanelTitle>显示格式</PanelTitle>
              <HeadCaret $ml={12}><Caret $size={5.5} $color="#fff" /></HeadCaret>
              <CloseIcon ml={41} />
            </PanelHead>
            <SectionLabel $h={21}>所选文字</SectionLabel>
            <SampleBox>示例文字</SampleBox>
            <CheckRow $h={26} $ml={12} $mt={3}><CheckBox />与其他选定内容比较</CheckRow>
            <SectionLabel $h={22} $mt={13}>所选文字的格式</SectionLabel>
            <RevealBox>
              <RevealBody>
                {revealRows.map(([kind, indent, text, twisty], idx) => (
                  <RevealRow key={idx} $kind={kind} $indent={indent}>
                    {twisty && (
                      <Twisty viewBox="0 0 8 8">
                        {twisty === "open" ? <path d="M7 1v6H1z" fill="#444" /> : <path d="M2 .5l4 3.500-4 3.500z" fill="none" stroke="#888" />}
                      </Twisty>
                    )}
                    {text}
                  </RevealRow>
                ))}
              </RevealBody>
              <RevealScroll>
                <ScrollButton $w={18} $h={17}><Caret $size={5} $color="#999" $turn={180} /></ScrollButton>
                <RevealThumb />
                <RevealSpace />
                <ScrollButton $w={18} $h={17}><Caret $size={5} $color="#999" /></ScrollButton>
              </RevealScroll>
            </RevealBox>
            <SectionLabel $h={31} $mt={3}>选项</SectionLabel>
            <CheckRow $h={30} $ml={12} $mt={7}><CheckBox />区分样式源</CheckRow>
            <CheckRow $h={30} $ml={12}><CheckBox><CheckMark /></CheckBox>显示所有格式标记</CheckRow>
          </SidePanel>
        </Workspace>

        <StatusBar>
          <StatusText $gap={20}>第 1 页, 共 1 页</StatusText>
          <StatusText $gap={20}>414 个字</StatusText>
          <StatusText $gap={20}>中文(中国)</StatusText>
          <svg width="16" height="20" viewBox="0 0 16 20" fill="none" stroke="#eee">
            <path d="M2 8h12v11H2zM4 11h8M4 14h8M4 17h8" />
            <path d="M8 1h6v6H8z" fill="#eee" />
            <circle cx="4" cy="4" r="3" fill="#eee" />
          </svg>
          <StatusRight>
            <svg width="20" height="22" viewBox="0 0 20 22">
              <path d="M0 2h18v11H0z" fill="#eee" />
              <path d="M5 20h6" stroke="#eee" strokeWidth="2" />
              <circle cx="14" cy="15" r="5" fill="#262626" stroke="#eee" strokeWidth="2.500" />
            </svg>
            <StatusText $gap={12}>显示器设置</StatusText>
            <ViewButton><ToolIcon name="read" size={20} /></ViewButton>
            <ViewButton $on><ToolIcon name="print" size={22} /></ViewButton>
            <ViewButton><ToolIcon name="web" size={20} /></ViewButton>
            <ZoomMinus viewBox="0 0 14 3"><path d="M0 1.500h12" stroke="#eee" strokeWidth="2.500" /></ZoomMinus>
            <ZoomTrack><ZoomMark /><ZoomThumb /></ZoomTrack>
            <svg width="14" height="14" viewBox="0 0 14 14"><path d="M0 7h13M6.500 1v12" stroke="#eee" strokeWidth="2" /></svg>
            <ZoomValue>308%</ZoomValue>
          </StatusRight>
        </StatusBar>

        <Wallpaper />
      </Shell>
    </>
  );
}
